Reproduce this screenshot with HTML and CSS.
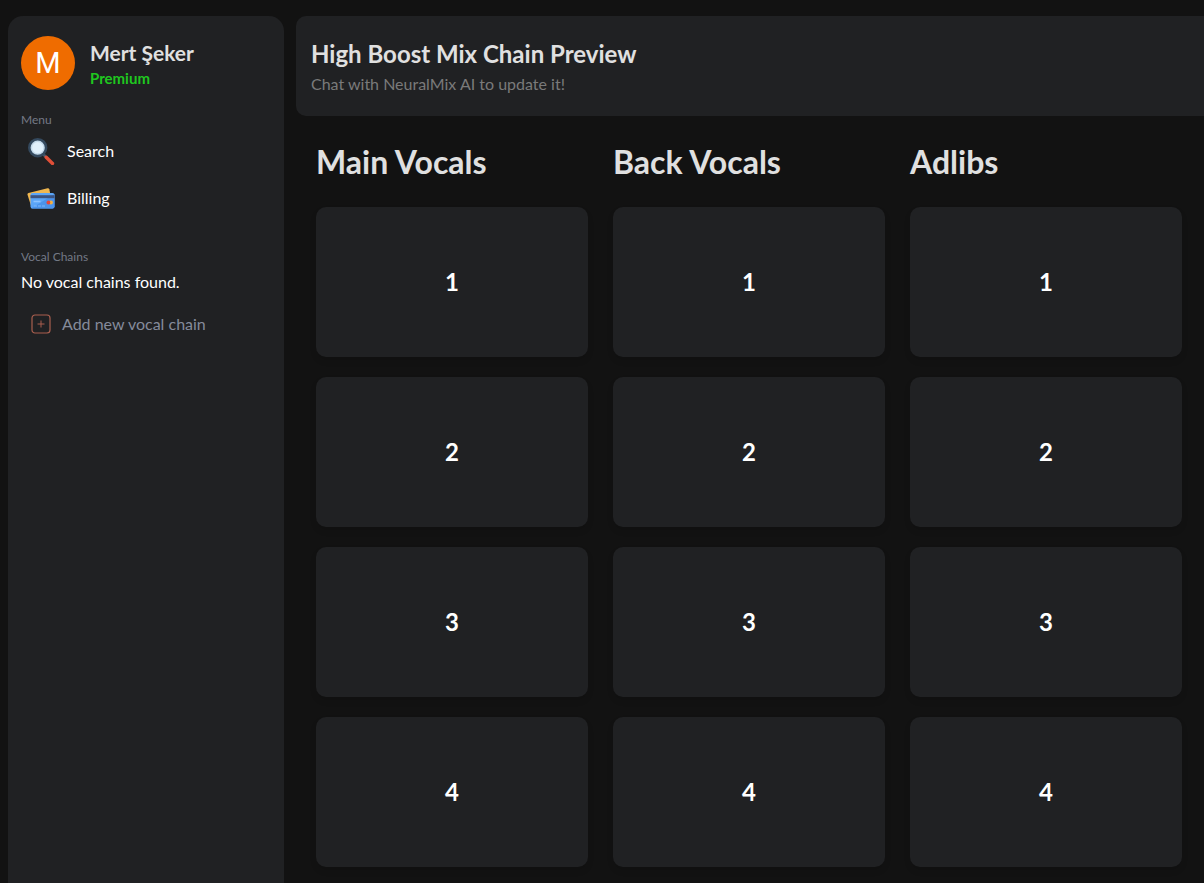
FILE: index.html
```html
<!DOCTYPE html>
<html lang="en">
<head>
<meta charset="utf-8">
<meta name="viewport" content="width=device-width, initial-scale=1">
<title>High Boost Mix Chain Preview</title>
<link rel="stylesheet" href="styles.css">
</head>
<body>
<div class="app">
  <aside class="sidebar">
    <div class="profile">
      <div class="avatar" aria-hidden="true">M</div>
      <div class="profile-text">
        <p class="profile-name">Mert Şeker</p>
        <p class="profile-plan">Premium</p>
      </div>
    </div>
    <nav class="menu" aria-labelledby="menu-label">
      <h2 class="section-label" id="menu-label">Menu</h2>
      <a class="menu-link" href="#search">
        <svg class="menu-icon" viewBox="0 -1 28 28" aria-hidden="true">
          <path d="M16 16l3.500 3.500" stroke="#43586b" stroke-width="2.600"/>
          <path d="M19.200 19.200l6.300 6.300" stroke="#e04f38" stroke-width="3.400" stroke-linecap="round"/>
          <circle cx="10.700" cy="9.700" r="8.400" fill="#c3d9ea" stroke="#34495e" stroke-width="2.600"/>
          <circle cx="10.700" cy="9.700" r="5.600" fill="#e0f0fb"/>
        </svg>
        <span>Search</span>
      </a>
      <a class="menu-link" href="#billing">
        <svg class="menu-icon" viewBox="0 -1 28 28" aria-hidden="true">
          <path d="M1.500 8L20.500 3.200a1.500 1.500 0 0 1 1.800 1.100L25 17 4.500 22.500 0.500 9.500A1.500 1.500 0 0 1 1.500 8z" fill="#f0b750"/>
          <rect x="3.500" y="8" width="24" height="15.500" rx="2" fill="#5ba5f7"/>
          <path d="M4 23.500L27.500 9v12.500a2 2 0 0 1-2 2z" fill="#4b93eb"/>
          <rect x="3.500" y="10.200" width="24" height="3" fill="#3d5480"/>
          <path d="M6.500 16.500h7" stroke="#8cc2ff" stroke-width="1.600"/>
          <path d="M7 21h11" stroke="#80b9fa" stroke-width="1.200" stroke-dasharray="3 1"/>
          <circle cx="24" cy="17.500" r="1.900" fill="#f5b13d"/>
          <circle cx="21.400" cy="17.500" r="1.900" fill="#e5473b"/>
        </svg>
        <span>Billing</span>
      </a>
    </nav>
    <section class="chains">
      <h2 class="section-label">Vocal Chains</h2>
      <p class="chains-empty">No vocal chains found.</p>
      <button class="add-chain" type="button">
        <svg class="add-icon" viewBox="0 0 20 20" aria-hidden="true">
          <rect x="1" y="1" width="18" height="18" rx="3" fill="none" stroke="#a95f4f" stroke-width="1.200"/>
          <path d="M6.500 10h7M10 6.500v7" stroke="#a95f4f" stroke-width="1"/>
        </svg>
        <span>Add new vocal chain</span>
      </button>
    </section>
  </aside>
  <main class="content">
    <header class="preview-header">
      <h1 class="preview-title">High Boost Mix Chain Preview</h1>
      <p class="preview-hint">Chat with NeuralMix AI to update it!</p>
    </header>
    <div class="columns">
      <section class="column">
        <h2 class="column-title">Main Vocals</h2>
        <div class="card">1</div>
        <div class="card">2</div>
        <div class="card">3</div>
        <div class="card">4</div>
      </section>
      <section class="column">
        <h2 class="column-title">Back Vocals</h2>
        <div class="card">1</div>
        <div class="card">2</div>
        <div class="card">3</div>
        <div class="card">4</div>
      </section>
      <section class="column">
        <h2 class="column-title">Adlibs</h2>
        <div class="card">1</div>
        <div class="card">2</div>
        <div class="card">3</div>
        <div class="card">4</div>
      </section>
    </div>
  </main>
</div>
</body>
</html>
```
FILE: styles.css
```css
* {
  box-sizing: border-box;
}

body {
  margin: 0;
  background: #121212;
  color: #ffffff;
  font: 16px/20px "Trebuchet MS", Lato, sans-serif;
}

h1, h2, p {
  margin: 0;
}

.app {
  display: grid;
  grid-template-columns: 276px 1fr;
  gap: 12px;
  min-height: 100vh;
  padding: 16px 0 0 8px;
}

.sidebar {
  padding: 20px 13px;
  border-radius: 15px 15px 0 0;
  background: #202123;
}

.profile {
  display: flex;
  gap: 15px;
  align-items: center;
}

.avatar {
  display: flex;
  align-items: center;
  justify-content: center;
  width: 54px;
  height: 54px;
  border-radius: 50%;
  background: #ef6c00;
  font: 29px/56px Roboto, sans-serif;
}

.profile-text {
  padding-top: 4px;
}

.profile-name {
  color: #e0e0e0;
  font-size: 21px;
  font-weight: bold;
  line-height: 26px;
}

.profile-plan {
  color: #1fc71f;
  font-size: 15px;
  font-weight: bold;
  line-height: 24px;
}

.section-label {
  color: #747986;
  font-size: 12px;
  font-weight: normal;
  line-height: 16px;
}

.menu {
  display: flex;
  flex-direction: column;
  padding-top: 23px;
}

.menu .section-label {
  line-height: 14px;
}

.menu-link {
  display: flex;
  gap: 12px;
  align-items: center;
  height: 47px;
  padding-left: 6px;
  color: #ffffff;
  text-decoration: none;
}

.menu-icon {
  width: 28px;
  height: 28px;
}

.chains {
  padding-top: 28px;
}

.chains-empty {
  padding-top: 7px;
}

.add-chain {
  display: flex;
  gap: 11px;
  align-items: center;
  margin-top: 22px;
  padding: 0 10px;
  border: 0;
  background: none;
  color: #858b9b;
  font: inherit;
  cursor: pointer;
}

.add-icon {
  width: 20px;
  height: 20px;
}

.preview-header {
  padding: 22px 15px 20px;
  border-radius: 10px 0 0 10px;
  background: #202123;
}

.preview-title {
  color: #e0e0e0;
  font-size: 24px;
  line-height: 32px;
}

.preview-hint {
  padding-top: 2px;
  color: #7a7a7a;
  line-height: 24px;
}

.columns {
  display: grid;
  grid-template-columns: repeat(3, 1fr);
  gap: 25px;
  padding: 26px 22px 16px 20px;
}

.column {
  display: flex;
  flex-direction: column;
  gap: 20px;
}

.column-title {
  padding-bottom: 5px;
  color: #e0e0e0;
  font-size: 32px;
  line-height: 40px;
}

.card {
  display: flex;
  align-items: center;
  justify-content: center;
  height: 150px;
  border-radius: 10px;
  background: #202123;
  box-shadow: 0 4px 6px rgba(0, 0, 0, 0.1);
  font-size: 24px;
  font-weight: bold;
}
```
